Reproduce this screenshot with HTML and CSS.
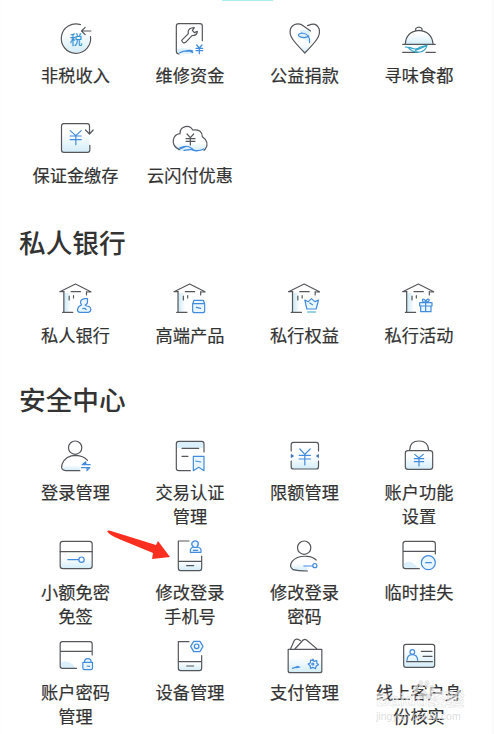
FILE: index.html
```html
<!DOCTYPE html>
<html lang="zh-CN">
<head>
<meta charset="utf-8">
<title>全部服务</title>
<link rel="stylesheet" href="styles.css">
</head>
<body>
<svg class="defs" width="0" height="0">
  <defs>
    <linearGradient id="wash" x1="0" y1="0" x2="0" y2="1"><stop offset=".25" stop-color="#fff"/><stop offset="1" stop-color="#d3edf9"/></linearGradient>
    <linearGradient id="side"><stop offset="0" stop-color="#c9e8f3"/><stop offset="1" stop-color="#fff"/></linearGradient>
    <g id="house">
      <path class="side" d="M190 84h22v56h-22z"/>
      <path d="M178 80l47-23 46 23M178 80h13M258 81h13M212 80h28M190 80v61M186 142h31M206 93v12M219 92v7M258 80v10"/>
    </g>
  </defs>
</svg>
<main class="page">
  <div class="tab-indicator"></div>
  <section class="grid first">
    <div class="item">
      <svg class="icon" viewBox="166.5 57 120 120"><circle class="wash" cx="227" cy="116" r="41"/><path d="M240 74A44 44 0 1 0 270 110M243 93h28M254 82l-11 11 11 11"/><text class="glyph" x="227" y="131">税</text></svg>
      <span class="label">非税收入</span>
    </div>
    <div class="item">
      <svg class="icon" viewBox="510 57 120 120"><path class="pale" d="M531 148q18-8 49 2v11h-49z"/><path d="M537 162q-8 0-8-8V78q0-7 7-7h64q7 0 7 7v44M545 121l20-20q-3-14 10-17l8-1-6 8 6 7 9-4q-1 13-16 13l-19 20q-8 5-12-6z"/><path class="blue" d="M539 158q20-10 39-1M558 154q11-5 20-1M590 135l8 9 8-9M588 145h20M588 152h20M598 144v17"/></svg>
      <span class="label">维修资金</span>
    </div>
    <div class="item">
      <svg class="icon" viewBox="112.5 57 120 120"><path class="wash" d="M136 124h73l-37 35z"/><path class="pale" d="M158 91h28v35l-28-15z"/><path d="M180 77l11-4q17-4 24 14c6 20-10 38-43 72-33-34-50-52-43-72 6-16 26-20 39-9l21 15"/><path class="blue" d="M186 128q3-27-23-29-15 4-8 10 17 8 29-1"/></svg>
      <span class="label">公益捐款</span>
    </div>
    <div class="item">
      <svg class="icon" viewBox="456 57 120 120"><path class="wash" d="M475 132q1-40 41-40t41 40z"/><path d="M467 133h98M475 131q3-37 41-40 38 3 42 40M506 91v-5q10-9 19 0v5M467 157h45M537 157h28"/><path class="teal" d="M475 141l15 2q19 9 30-2l20-5q-4 16-20 20-23 3-36-13M505 151q17-5 30-12"/></svg>
      <span class="label">寻味食都</span>
    </div>
    <div class="item">
      <svg class="icon" viewBox="166.5 57 120 120"><path class="wash" d="M183 82h84v74h-84z"/><path d="M268 136v14q0 7-7 7h-71q-7 0-7-7V78q0-7 7-7h70q7 0 7 7v23M255 90l12 12 11-12"/><path class="blue" d="M209 92l17 15 16-15M209 108h33M209 119h33M226 107v27"/></svg>
      <span class="label">保证金缴存</span>
    </div>
    <div class="item">
      <svg class="icon" viewBox="510 57 120 120"><path class="wash" d="M521 120h99q5 25-14 32h-70q-18-8-15-32z"/><path d="M538 149q-21-10-18-29 3-17 20-19 0-18 16-21 15-3 22 10 28-4 29 20 23 16 9 37l-4 4M561 102l10 11 10-11M558 116h27M558 124h27M571 113v22"/><path class="blue" d="M539 144q24-13 42 6 15 5 30-3M552 151l22-3q9 7 21 4M540 147l16-7"/></svg>
      <span class="label">云闪付优惠</span>
    </div>
  </section>

  <h2>私人银行</h2>
  <section class="grid bank">
    <div class="item">
      <svg class="icon" viewBox="166.5 42 120 120"><use href="#house"/><path class="blue fill" d="M243 120q-9-16 9-19h9v9q0 8-7 10l4 3q12 0 13 10 0 9-8 9h-24q-8 0-8-8 2-11 12-14zM247 131q6-2 10 3"/></svg>
      <span class="label">私人银行</span>
    </div>
    <div class="item">
      <svg class="icon" viewBox="510 42 120 120"><use href="#house" x="344"/><path class="blue fill" d="M582 106h28l4 10v21q0 6-6 6h-24q-6 0-6-6v-21zM578 116h36M589 127l13 3"/></svg>
      <span class="label">高端产品</span>
    </div>
    <div class="item">
      <svg class="icon" viewBox="112.5 42 120 120"><use href="#house" x="-55"/><path class="blue fill" d="M172 105l10 5 10-9 10 9 11-5-7 27h-28zM187 114l8 5"/><path class="teal" d="M180 141h24"/></svg>
      <span class="label">私行权益</span>
    </div>
    <div class="item">
      <svg class="icon" viewBox="456 42 120 120"><use href="#house" x="289"/><path class="blue fill" d="M518 113h37v10h-37zM521 123h31v17h-31zM536 113v27M536 111q-13 0-9-8 7-2 9 8M536 111q13 0 10-8-8-2-10 8"/></svg>
      <span class="label">私行活动</span>
    </div>
  </section>

  <h2>安全中心</h2>
  <section class="grid safe">
    <div class="item">
      <svg class="icon" viewBox="166.5 183 120 120"><path class="wash" d="M186 264h52v22h-48q-9-8-4-22z"/><circle cx="224" cy="218" r="20"/><path d="M238 287h-43q-16-2-10-20 10-26 42-26 21 1 34 15"/><path class="blue" d="M269 269h-24l10-8M243 278h25l-9 9M256 261v7M260 279v7"/></svg>
      <span class="label">登录管理</span>
    </div>
    <div class="item">
      <svg class="icon" viewBox="510 183 120 120"><path class="pale" d="M531 201h78v18h-78z"/><path d="M571 287h-35q-7 0-7-7v-74q0-7 7-7h69q7 0 7 7v25M546 220h50M546 244h18"/><path class="blue fill" d="M580 244h32v43l-16-10-16 10zM587 258l15 3"/></svg>
      <span class="label">交易认证管理</span>
    </div>
    <div class="item">
      <svg class="icon" viewBox="112.5 33 120 120"><path class="wash" d="M131 80h83v52h-83z"/><path d="M131 78V59q0-7 7-7h68q7 0 7 7v19M131 108v17q0 7 7 7h68q7 0 7-7v-17"/><path class="blue" d="M157 72l15 16 16-16M155 91h34M155 102h34M172 88v32"/><path class="solid" d="M130 86l10 7-10 7zM214 86l-9 7 9 7z"/></svg>
      <span class="label">限额管理</span>
    </div>
    <div class="item">
      <svg class="icon" viewBox="456 33 120 120"><rect class="wash" x="475" y="77" width="82" height="56"/><rect x="475" y="77" width="82" height="56" rx="8"/><path d="M488 76q0-28 28-28t29 28"/><path class="blue" d="M503 88l13 11 13-11M502 101h28M502 110h28M516 99v24"/></svg>
      <span class="label">账户功能设置</span>
    </div>
    <div class="item">
      <svg class="icon" viewBox="166.5 33 120 120"><path class="wash" d="M179 85h96v46h-96z"/><rect x="179" y="49" width="96" height="82" rx="8"/><path d="M179 80h96"/><path class="blue" d="M202 104h33"/><circle class="blue" cx="243" cy="104" r="8"/></svg>
      <span class="label">小额免密免签</span>
    </div>
    <div class="item">
      <svg class="icon" viewBox="510 33 120 120"><path class="wash" d="M536 100h68v37h-68z"/><path d="M567 48h-32v82q0 7 7 7h56q7 0 7-7V93M535 109h70M560 122h21"/><path class="blue fill" d="M571 82v-8q2-7 10-8-8-6-5-13 7-9 17-3 5 8-2 16 12 1 12 10v6zM581 66q5 3 10 0M580 76h13"/></svg>
      <span class="label">修改登录手机号</span>
    </div>
    <div class="item">
      <svg class="icon" viewBox="112.5 33 120 120"><path class="wash" d="M132 108h47v29h-44q-9-12-3-29z"/><circle cx="170" cy="68" r="20"/><path d="M180 138q-29 0-43-4-14-9-3-25 14-17 45-15 17 1 27 11"/><path class="blue" d="M169 123h27"/><circle class="blue" cx="202" cy="122" r="6"/></svg>
      <span class="label">修改登录密码</span>
    </div>
    <div class="item">
      <svg class="icon" viewBox="456 33 120 120"><path class="pale" d="M470 115q25-14 43 15h-43z"/><path d="M517 131h-42q-7 0-7-7V56q0-7 7-7h83q7 0 7 7v31M468 79h97"/><circle class="blue fill" cx="544" cy="113" r="21"/><path class="blue" d="M536 113h17"/></svg>
      <span class="label">临时挂失</span>
    </div>
    <div class="item">
      <svg class="icon" viewBox="166.5 21 120 120"><path class="pale" d="M180 100q25-12 45 17h-45z"/><path d="M228 118h-42q-7 0-7-7V45q0-7 7-7h82q7 0 7 7v33M179 67h96"/><path class="blue fill" d="M247 100h29v17q0 5-5 5h-19q-5 0-5-5zM252 99q0-10 10-10t10 10M260 111l7 1"/></svg>
      <span class="label">账户密码管理</span>
    </div>
    <div class="item">
      <svg class="icon" viewBox="510 21 120 120"><path class="wash" d="M536 90h68v35h-68z"/><path d="M567 38h-32v80q0 7 7 7h56q7 0 7-7V80M535 98h70M560 111h21"/><path class="blue fill" d="M581 37h19l9 15-9 16h-19l-9-16z"/><circle class="blue" cx="590" cy="52" r="7"/></svg>
      <span class="label">设备管理</span>
    </div>
    <div class="item">
      <svg class="icon" viewBox="112.5 21 120 120"><path class="wash" d="M122 70h101v61H122z"/><path d="M122 61h101v64q0 6-6 6h-89q-6 0-6-6zM129 60l11-25q4-6 12-4l7 4M142 60l25-27q5-4 10 0l33 28"/><path class="blue" d="M135 118l17-6M147 116l10-2M196 90l4 7 8-2 0 8 5 4-7 4-2 8-8-4-7 3-1-8-6-5 7-4 0-8 7 2z"/><circle class="blue" cx="196" cy="105" r="3"/></svg>
      <span class="label">支付管理</span>
    </div>
    <div class="item">
      <svg class="icon" viewBox="456 21 120 120"><rect class="wash" x="470" y="46" width="93" height="69"/><rect x="470" y="46" width="93" height="69" rx="7"/><path d="M479 98h77M523 67h32M528 82h27"/><circle class="blue" cx="496" cy="69" r="7"/><path class="blue" d="M480 94q1-17 16-17t16 17"/></svg>
      <span class="label five">线上客户身份核实</span>
    </div>
  </section>

  <svg class="pointer" width="66" height="30" viewBox="0 0 66 30"><path d="M2 1q2-1 4 0l45 14 2-4 12 16-18 2 1-6L14 9Q4 5 2 1z"/></svg>
  <div class="watermark">
    <svg width="24" height="20" viewBox="0 0 24 20"><ellipse cx="4" cy="9" rx="2.6" ry="4"/><ellipse cx="9" cy="4" rx="2.6" ry="4"/><ellipse cx="15" cy="4" rx="2.6" ry="4"/><ellipse cx="20" cy="9" rx="2.6" ry="4"/><path d="M12 9l9 10H3z"/></svg>
    <div class="brand">Bai<span>du</span>经验</div>
    <div class="site">jingyan.baidu.com</div>
  </div>
</main>
</body>
</html>
```
FILE: styles.css
```css
* { box-sizing: border-box; }
body {
  margin: 0;
  background: #fff;
  color: #333;
  font-family: "Noto Sans CJK SC", sans-serif;
}
.defs { position: absolute; }
.page {
  position: relative;
  height: 734px;
  padding: 0 17.5px 0 17px;
  overflow: hidden;
  border-left: 1px solid #fcfcfc;
  border-right: 2px solid #fafafa;
}
.tab-indicator {
  width: 51px;
  height: 1px;
  margin-left: 204px;
  background: #a9eef3;
}
.grid {
  display: grid;
  grid-template-columns: repeat(4, 114.5px);
  grid-auto-rows: 100px;
  margin-left: .25px;
}
.first { margin-top: 18px; }
.item {
  display: flex;
  flex-direction: column;
  align-items: center;
}
.icon {
  flex: none;
  width: 40px;
  height: 40px;
  margin-bottom: 3.5px;
  overflow: visible;
  fill: none;
  stroke: #55575b;
  stroke-width: 3.6;
  stroke-linecap: round;
  stroke-linejoin: round;
}
.icon .blue { stroke: #438bdd; }
.icon .fill { fill: #eaf7ff; }
.icon .teal { stroke: #34a6c9; }
.icon .wash { fill: url(#wash); stroke: none; }
.icon .pale { fill: #dcf0fb; stroke: none; }
.side { fill: url(#side); stroke: none; }
.icon .solid { fill: #3d6fb5; stroke: none; }
.glyph {
  fill: #3694d4;
  stroke: none;
  font-size: 38px;
  font-weight: 500;
  text-anchor: middle;
}
.label {
  width: 88px;
  font-size: 17.2px;
  font-weight: 400;
  line-height: 24px;
  text-align: center;
  -webkit-text-stroke: .2px #333;
}
.safe .label { width: 72px; }
.safe .five { width: 88px; }
h2 {
  height: 40px;
  margin: 0 0 0 1px;
  font-size: 26.7px;
  font-weight: 500;
  line-height: 38px;
}
.first + h2 { margin-top: 4px; }
.bank { margin-top: 16px; }
.bank + h2 { margin-top: 1px; }
.safe { margin-top: 16px; }
.pointer {
  position: absolute;
  left: 104px;
  top: 530px;
  fill: #fb2f20;
}
.watermark {
  position: absolute;
  left: 375px;
  top: 680px;
  width: 90px;
  color: rgba(255, 255, 255, .6);
  font-family: "Liberation Sans", "Noto Sans CJK SC", sans-serif;
  white-space: nowrap;
}
.watermark svg {
  display: block;
  margin-left: 36px;
  fill: rgba(225, 225, 225, .7);
}
.brand {
  margin-top: -10px;
  font-size: 18.5px;
  font-weight: 700;
  line-height: 20px;
  -webkit-text-stroke: .5px rgba(200, 200, 200, .6);
}
.site {
  font-size: 10.5px;
  line-height: 13px;
  color: rgba(215, 215, 215, .8);
}
```
